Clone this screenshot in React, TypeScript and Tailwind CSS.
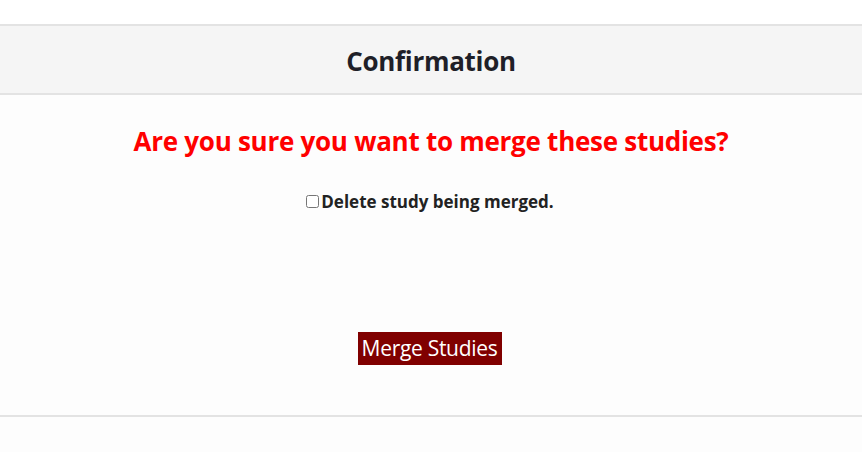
import React from 'react';

export default function App() {
  return (
    <div className="w-[862px] h-[452px] bg-[#fdfdfd] font-['Open_Sans',sans-serif] text-[#222]">
      <div className="h-[24px] bg-white" />
      <div className="h-[71px] bg-[#f5f5f5] border-y-2 border-[#e3e3e3] flex items-center justify-center pt-[3px]">
        <h1 className="text-[26px] font-bold tracking-[-0.3px] text-[#1f1f28]">Confirmation</h1>
      </div>
      <div className="h-[322px] border-b-2 border-[#e3e3e3] flex flex-col items-center">
        <p className="mt-[27px] text-[26px] font-bold text-[#ff0000] tracking-[-0.27px]">
          Are you sure you want to merge these studies?
        </p>
        <label className="mt-[28px] flex items-center text-[17px] font-bold text-[#222] pr-[2px]">
          <input type="checkbox" className="w-[13px] h-[13px] m-0 mr-[2px]" />
          Delete study being merged.
        </label>
        <button className="mt-[117px] mr-[3px] w-[144px] h-[33px] bg-[#800000] text-white text-[21px] tracking-[-0.3px] leading-none">
          Merge Studies
        </button>
      </div>
    </div>
  );
}
